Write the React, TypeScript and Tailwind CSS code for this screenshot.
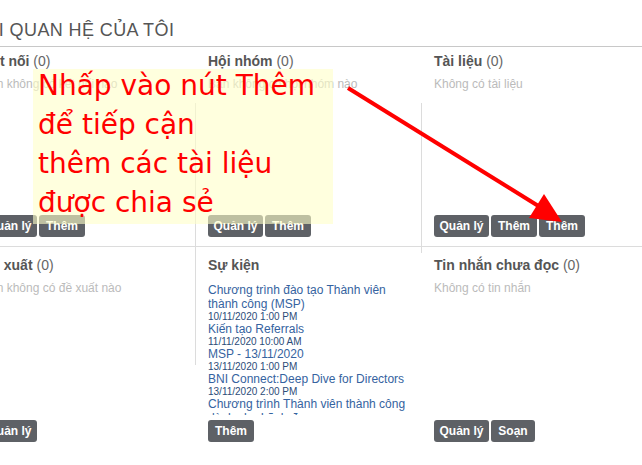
import React from "react";

const btn =
  "h-[22px] rounded-[3px] bg-[#5e6166] text-white text-[12px] font-bold flex items-center justify-center leading-none";

function Buttons({ items }: { items: { label: string; w: string }[] }) {
  return (
    <div className="flex gap-[2px]">
      {items.map((b, i) => (
        <button key={i} className={`${btn} ${b.w}`}>
          {b.label}
        </button>
      ))}
    </div>
  );
}

function Heading({ title, count }: { title: string; count?: string }) {
  return (
    <h3 className="text-[14px] leading-[16px] text-[#555] font-bold whitespace-nowrap">
      {title}
      {count && <span className="font-normal text-[#666]"> {count}</span>}
    </h3>
  );
}

function Empty({ text }: { text: string }) {
  return <p className="mt-[8px] text-[12px] leading-[14px] text-[#bbb] whitespace-nowrap">{text}</p>;
}

const events = [
  { title: "Chương trình đào tạo Thành viên thành công (MSP)", date: "10/11/2020 1:00 PM" },
  { title: "Kiến tạo Referrals", date: "11/11/2020 10:00 AM" },
  { title: "MSP - 13/11/2020", date: "13/11/2020 1:00 PM" },
  { title: "BNI Connect:Deep Dive for Directors", date: "13/11/2020 2:00 PM" },
  { title: "Chương trình Thành viên thành công dành cho Lãnh đạo", date: "14/11/2020 8:00 AM" },
];

const QL = { label: "Quản lý", w: "w-[55px]" };
const TH = { label: "Thêm", w: "w-[46px]" };

export default function App() {
  return (
    <div
      className="relative w-[642px] h-[465px] overflow-hidden bg-white"
      style={{ fontFamily: '"Liberation Sans", Arial, sans-serif' }}
    >
      <div className="ml-[-30px] w-[677px]">
        <div className="h-[47px] border-b border-[#c8c8c8] pt-[20px]">
          <h2 className="ml-[-1px] text-[18px] leading-[20px] tracking-[0.4px] text-[#555] whitespace-nowrap">
            MỐI QUAN HỆ CỦA TÔI
          </h2>
        </div>

        {/* row 1 */}
        <div className="flex h-[200px] border-b border-[#dcdcdc]">
          <div className="w-[225px] flex flex-col justify-between pl-[12px] pt-[6px] pb-[9px]">
            <div>
              <Heading title="Kết nối" count="(0)" />
              <Empty text="Bạn không có kết nối nào" />
            </div>
            <Buttons items={[QL, TH]} />
          </div>
          <div className="w-[1px] mt-[56px] bg-[#dcdcdc]" />
          <div className="w-[225px] flex flex-col justify-between pl-[12px] pt-[6px] pb-[9px]">
            <div>
              <Heading title="Hội nhóm" count="(0)" />
              <Empty text="Bạn không có hội nhóm nào" />
            </div>
            <Buttons items={[QL, TH]} />
          </div>
          <div className="w-[1px] mt-[56px] bg-[#dcdcdc]" />
          <div className="w-[225px] flex flex-col justify-between pl-[12px] pt-[6px] pb-[9px]">
            <div>
              <Heading title="Tài liệu" count="(0)" />
              <Empty text="Không có tài liệu" />
            </div>
            <Buttons items={[QL, TH, TH]} />
          </div>
        </div>

        {/* row 2 */}
        <div className="flex h-[204px]">
          <div className="w-[225px] flex flex-col justify-between pl-[12px] pt-[10px] pb-[9px]">
            <div>
              <Heading title="Đề xuất" count="(0)" />
              <Empty text="Bạn không có đề xuất nào" />
            </div>
            <Buttons items={[QL]} />
          </div>
          <div className="w-[1px] mb-[86px] bg-[#dcdcdc]" />
          <div className="w-[225px] flex flex-col justify-between pl-[12px] pr-[12px] pt-[10px] pb-[9px]">
            <div>
              <Heading title="Sự kiện" />
              <div className="mt-[10px] h-[132px] overflow-hidden">
                {events.map((e, i) => (
                  <div key={i}>
                    <a className="block text-[12px] leading-[14px] text-[#3563a0]">{e.title}</a>
                    <div className="text-[10px] leading-[11px] text-[#2c4c78]">{e.date}</div>
                  </div>
                ))}
              </div>
            </div>
            <Buttons items={[TH]} />
          </div>
          <div className="w-[1px] mb-[198px] bg-[#dcdcdc]" />
          <div className="w-[225px] flex flex-col justify-between pl-[12px] pt-[10px] pb-[9px]">
            <div>
              <Heading title="Tin nhắn chưa đọc" count="(0)" />
              <Empty text="Không có tin nhắn" />
            </div>
            <Buttons items={[QL, { label: "Soạn", w: "w-[44px]" }]} />
          </div>
        </div>
      </div>

      {/* annotation callout */}
      <div
        className="absolute left-[33px] top-[69px] w-[300px] h-[155px] bg-[#ffffc8]/60 pl-[5px]"
        style={{ fontFamily: '"DejaVu Sans", Verdana, sans-serif' }}
      >
        <p className="-mt-[3px] text-[28px] leading-[39px] text-[#ff0000] whitespace-nowrap">
          Nhấp vào nút Thêm
          <br />
          để tiếp cận
          <br />
          thêm các tài liệu
          <br />
          được chia sẻ
        </p>
      </div>

      <svg className="absolute inset-0 pointer-events-none" width="642" height="465" viewBox="0 0 642 465">
        <line x1="348" y1="88" x2="540" y2="207" stroke="#ff0000" strokeWidth="4" />
        <polygon points="562,222 529,218 544,194" fill="#ff0000" />
      </svg>
    </div>
  );
}
